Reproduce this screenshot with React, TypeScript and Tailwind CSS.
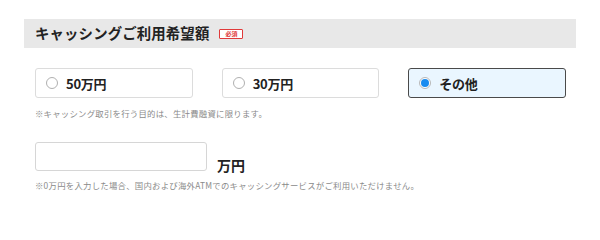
import React from 'react';

const font = { fontFamily: '"Noto Sans CJK JP", "Noto Sans", sans-serif' };

interface RadioProps {
  label: string;
  checked?: boolean;
}

const RadioBox: React.FC<RadioProps> = ({ label, checked }) => (
  <label
    className={
      checked
        ? 'flex h-[30px] items-center gap-[8px] rounded-[3px] border border-[#4a4a4a] bg-[#eaf6ff] pl-[10px]'
        : 'flex h-[30px] items-center gap-[8px] rounded-[3px] border border-[#dcdcdc] bg-white pl-[10px]'
    }
  >
    {checked ? (
      <span className="flex h-[12px] w-[12px] items-center justify-center rounded-full border border-[#b8b8b8] bg-white">
        <span className="h-[8px] w-[8px] rounded-full bg-[#1a8cf0]" />
      </span>
    ) : (
      <span className="h-[12px] w-[12px] rounded-full border border-[#b0b0b0] bg-white" />
    )}
    <span className="text-[13px] font-bold leading-none tracking-[-0.02em] text-[#222]">{label}</span>
  </label>
);

export default function App() {
  return (
    <div className="h-[209px] w-[600px] bg-white px-6 pt-[19px]" style={font}>
      <div className="flex h-[29px] items-center bg-[#e8e8e8] pl-[11px]">
        <h2 className="text-[14.4px] font-bold leading-none tracking-[0.01em] text-[#222]">
          キャッシングご利用希望額
        </h2>
        <span className="ml-[10px] flex h-[10px] w-[24px] items-center justify-center rounded-[1px] border border-[#e03a3a] bg-white text-[6px] font-bold leading-none text-[#e03a3a]">
          必須
        </span>
      </div>

      <div className="px-[11px] pr-[10px]">
        <div className="mt-[20px] grid grid-cols-3 gap-[29px]">
          <RadioBox label="50万円" />
          <RadioBox label="30万円" />
          <RadioBox label="その他" checked />
        </div>

        <p className="mt-[9px] text-[8.4px] leading-[12px] tracking-[0.25px] text-[#8a8a8a]">
          ※キャッシング取引を行う目的は、生計費融資に限ります。
        </p>

        <div className="mt-[23px] flex items-end gap-[10px]">
          <input
            type="text"
            className="h-[29px] w-[172px] rounded-[3px] border border-[#d6d6d6] bg-white px-2 text-[13px] outline-none"
          />
          <span className="mb-[-2px] text-[14px] font-bold leading-[16px] text-[#222]">万円</span>
        </div>

        <p className="mt-[8px] text-[8.4px] leading-[12px] tracking-[0.25px] text-[#8a8a8a]">
          ※0万円を入力した場合、国内および海外ATMでのキャッシングサービスがご利用いただけません。
        </p>
      </div>
    </div>
  );
}
